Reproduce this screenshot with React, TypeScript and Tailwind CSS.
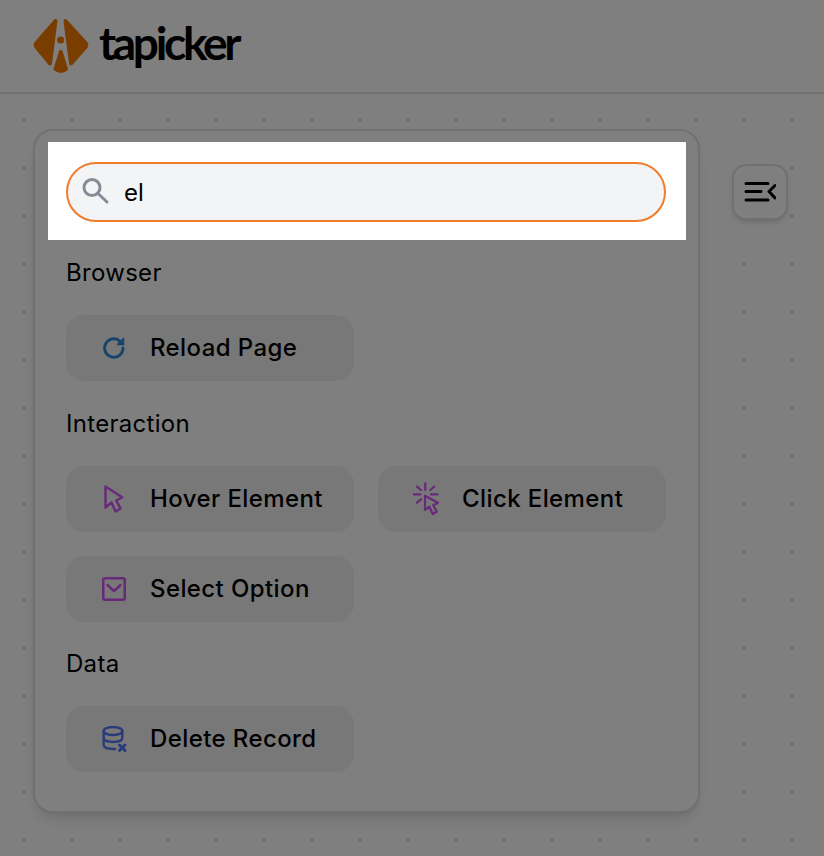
import type { ReactNode } from 'react';

function Logo() {
  return (
    <svg width="58" height="58" viewBox="32 17 58 58" className="shrink-0">
      <g fill="#f57a00" stroke="#f57a00" strokeWidth="4" strokeLinejoin="round">
        <path d="M55.500 21 L36 43.500 Q35 45 36 46.500 L50 63.500 Z" />
        <path d="M65.500 21 L86 43.500 Q87 45 86 46.500 L71 63.500 Z" />
        <path d="M60.800 52 L66 69 Q61 73 55.500 69 Z" />
      </g>
      <circle cx="60.700" cy="40" r="3.600" fill="#f57a00" />
    </svg>
  );
}

function SearchIcon() {
  return (
    <svg width="30" height="30" viewBox="0 0 30 30" fill="none" stroke="#858c96" strokeWidth="3" strokeLinecap="round" className="shrink-0">
      <circle cx="11" cy="10.500" r="8" />
      <path d="M17 16.500 L26 25" />
    </svg>
  );
}

function ReloadIcon() {
  return (
    <svg width="24" height="24" viewBox="0 0 24 24" fill="none" stroke="#2c86d9" strokeWidth="2.900" strokeLinecap="round" strokeLinejoin="round">
      <path d="M21 12a9.200 9.200 0 1 1-2.700-6.500" />
      <path d="M21.500 2.500v6h-6z" fill="#2c86d9" strokeWidth="1.500" />
    </svg>
  );
}

function HoverIcon() {
  return (
    <svg width="20" height="28" viewBox="-1.500 -1.500 20 28" fill="none" stroke="#cf52f0" strokeWidth="2.400" strokeLinejoin="round">
      <path d="M0 0 L0 21 L6 16 L10 25 L15 22 L10.700 14 L16.700 10.700 Z" />
    </svg>
  );
}

function ClickIcon() {
  return (
    <svg width="27" height="34" viewBox="0 0 27 34" fill="none" stroke="#cf52f0" strokeWidth="2.200" strokeLinecap="round" strokeLinejoin="round">
      <path d="M12.300 1.300V8M0.700 12.300H7.300M18 12.300H24.700M4 4.700L8 8M21.300 4.700L17.300 8M4 20.700L8 17.300" />
      <path d="M12 13.700 L12 28 L16.300 24.700 L19.700 32 L23.700 29.700 L20.300 23 L25 20.700 Z" />
    </svg>
  );
}

function SelectIcon() {
  return (
    <svg width="24" height="24" viewBox="0 0 24 24" fill="none" stroke="#cf52f0" strokeWidth="2.500" strokeLinecap="round" strokeLinejoin="round">
      <rect x="1.250" y="1.250" width="21.500" height="21.500" rx="2" />
      <path d="M5.500 8 L12 14 L18.500 8" />
    </svg>
  );
}

function DeleteRecordIcon() {
  return (
    <svg width="26" height="27" viewBox="-1.500 0 26 27" fill="none" stroke="#5578f0" strokeWidth="2.400" strokeLinecap="round" strokeLinejoin="round">
      <ellipse cx="10.500" cy="5" rx="9.300" ry="4" />
      <path d="M1.200 5v14c0 2.400 4 4 9.300 4h2" />
      <path d="M1.200 12c0 2.400 4 4 9.300 4s9.300-1.600 9.300-4V5" />
      <path d="M17 19l5.500 5.500M22.500 19l-5.500 5.500" strokeWidth="3" />
    </svg>
  );
}

function Action({ icon, label }: { icon: ReactNode; label: string }) {
  return (
    <div className="flex h-[66px] items-center rounded-[18px] bg-[#f0f0f0]">
      <div className="flex w-[84px] shrink-0 justify-center pl-[12px]">{icon}</div>
      <span className="text-[24px] font-medium tracking-[0.4px] text-black">{label}</span>
    </div>
  );
}

function Section({ title, children }: { title: string; children: ReactNode }) {
  return (
    <div>
      <div className="mb-[28px] text-[24px] leading-[28px] tracking-[0.3px] text-black">{title}</div>
      <div className="grid grid-cols-2 gap-[24px]">{children}</div>
    </div>
  );
}

export default function App() {
  return (
    <div className="h-[856px] w-[824px] overflow-hidden bg-white bg-[radial-gradient(circle,#dddddd_2px,transparent_2.5px)] bg-[size:48px_48px] font-['Inter',sans-serif]">
      <header className="flex h-[94px] items-center border-b-2 border-[#e4e4e4] bg-white pl-[32px]">
        <Logo />
        <span className="mb-[6px] ml-[9px] font-['Lato',sans-serif] text-[46px] leading-none font-bold tracking-[-3.3px] text-black">tapicker</span>
      </header>
      <div className="flex items-start pt-[35px] pl-[33px]">
        <aside className="h-[684px] w-[667px] rounded-[20px] border-2 border-[#e0e0e0] bg-white pt-[11px] pr-[12px] pl-[13px] shadow-lg">
          <div className="relative z-10 bg-white pt-[20px] pr-[20px] pb-[18px] pl-[18px] shadow-[0_0_0_2000px_rgba(0,0,0,0.5)]">
            <div className="flex h-[60px] items-center rounded-full border-2 border-[#f07c2c] bg-gray-100 pl-[13px]">
              <SearchIcon />
              <span className="mt-[1px] ml-[13px] text-[24px] text-black">el</span>
            </div>
          </div>
          <div className="flex flex-col gap-[28.5px] pt-[19px] pr-[20px] pl-[18px]">
            <Section title="Browser">
              <Action icon={<ReloadIcon />} label="Reload Page" />
            </Section>
            <Section title="Interaction">
              <Action icon={<HoverIcon />} label="Hover Element" />
              <Action icon={<ClickIcon />} label="Click Element" />
              <Action icon={<SelectIcon />} label="Select Option" />
            </Section>
            <Section title="Data">
              <Action icon={<DeleteRecordIcon />} label="Delete Record" />
            </Section>
          </div>
        </aside>
        <button className="mt-[35px] ml-[32px] flex h-[56px] w-[56px] items-center justify-center rounded-[14px] border-2 border-[#e0e0e0] bg-white shadow-md">
          <svg width="32" height="24" viewBox="0 0 32 24" fill="none" stroke="#000" strokeWidth="3" strokeLinecap="round" strokeLinejoin="round">
            <path d="M2 3.500H24M2 11.500H17M2 20H24M31 5.500L25 11.500L31 18" />
          </svg>
        </button>
      </div>
    </div>
  );
}
